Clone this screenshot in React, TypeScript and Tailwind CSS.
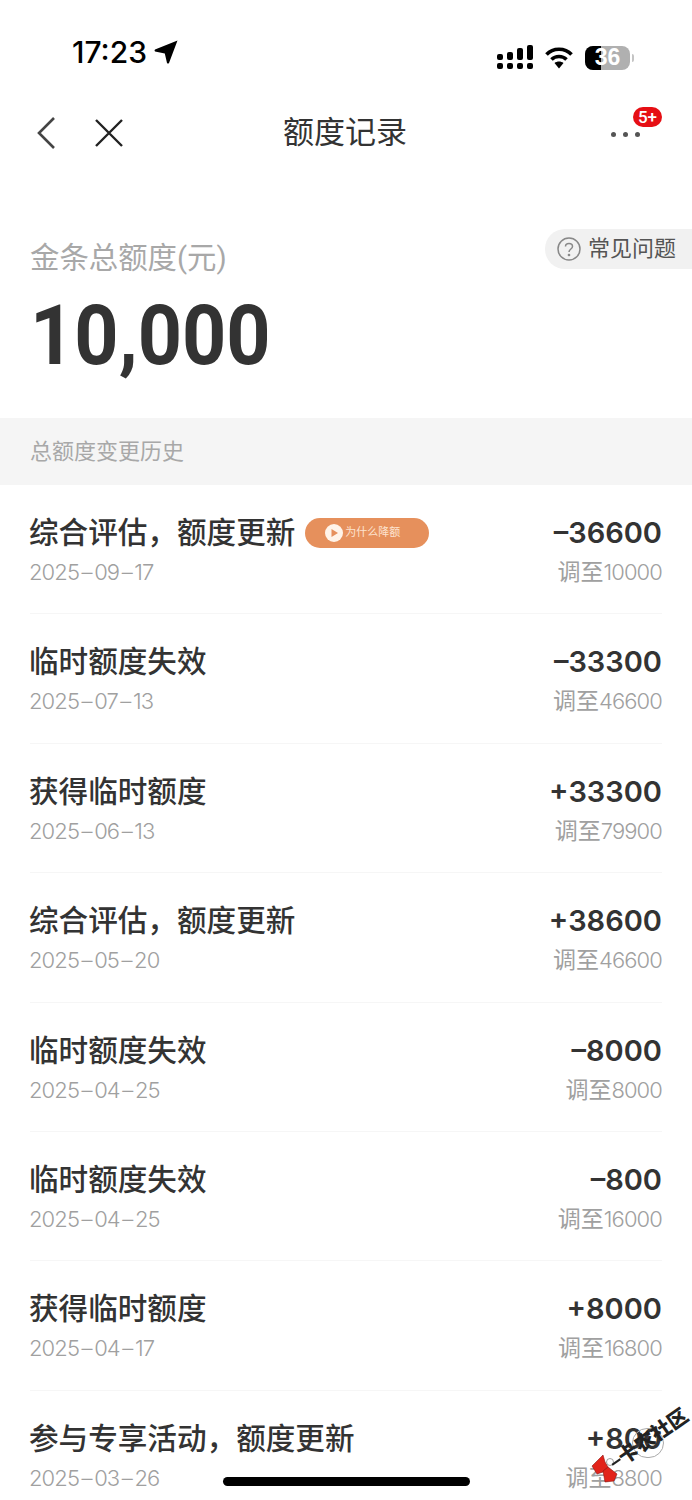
const CJK = `"Roboto","Noto Sans CJK SC",sans-serif`;
const NUM = `"Inter","Noto Sans CJK SC",sans-serif`;

const rows = [
  { title: "综合评估，额度更新", date: ["2025", "09", "17"], amount: "–36600", sub: "10000", badge: true },
  { title: "临时额度失效", date: ["2025", "07", "13"], amount: "–33300", sub: "46600" },
  { title: "获得临时额度", date: ["2025", "06", "13"], amount: "+33300", sub: "79900" },
  { title: "综合评估，额度更新", date: ["2025", "05", "20"], amount: "+38600", sub: "46600" },
  { title: "临时额度失效", date: ["2025", "04", "25"], amount: "–8000", sub: "8000" },
  { title: "临时额度失效", date: ["2025", "04", "25"], amount: "–800", sub: "16000" },
  { title: "获得临时额度", date: ["2025", "04", "17"], amount: "+8000", sub: "16800" },
  { title: "参与专享活动，额度更新", date: ["2025", "03", "26"], amount: "+800", sub: "8800" },
];

function StatusIcons() {
  return (
    <div className="flex items-center gap-[12px]">
      <svg width="36" height="25" viewBox="0 0 36 25" fill="#000">
        <rect x="0" y="9" width="6" height="6" rx="2" />
        <rect x="0" y="18" width="6" height="6" rx="2" />
        <rect x="10" y="7" width="6" height="8" rx="2" />
        <rect x="10" y="18" width="6" height="6" rx="2" />
        <rect x="20" y="3" width="6" height="12" rx="2" />
        <rect x="20" y="18" width="6" height="6" rx="2" />
        <rect x="30" y="0" width="6" height="15" rx="2" />
        <rect x="30" y="18" width="6" height="6" rx="2" />
      </svg>
      <svg width="28" height="23" viewBox="0 0 28 23" fill="none" stroke="#000" strokeWidth="3.6">
        <path d="M1.5 8.5 C8 1.5 20 1.5 26.5 8.5" />
        <path d="M6.5 13.5 C10.5 9.5 17.5 9.5 21.5 13.5" />
        <path d="M9.5 17 L14 22.5 L18.5 17 C16 15 12 15 9.5 17 Z" fill="#000" stroke="none" />
      </svg>
      <div className="flex items-center gap-[2px]">
        <div
          className="relative flex h-[24px] w-[45px] items-center justify-center overflow-hidden rounded-[8px] bg-[#b0b0b0] text-[23px] font-semibold leading-none text-white"
          style={{ fontFamily: '"Liberation Sans",sans-serif' }}
        >
          <div className="absolute inset-y-0 left-0 w-[16px] bg-black" />
          <span className="relative">36</span>
        </div>
        <div className="h-[8px] w-[2px] rounded-r bg-[#c4c4c4]" />
      </div>
    </div>
  );
}

function Row({ r, last }: { r: (typeof rows)[number]; last: boolean }) {
  return (
    <div className="mx-[30px] flex h-[129.4px] shrink-0 items-start justify-between border-b border-[#f6f6f6] pt-[27px]" style={last ? { borderBottom: 0 } : undefined}>
      <div className="flex flex-col">
        <div className="flex h-[41px] items-center">
          <span className="-ml-[1px] pt-[2px] text-[29.6px] font-medium leading-[41px] text-[#333333]">{r.title}</span>
          {r.badge && (
            <span className="ml-[10px] flex h-[30px] w-[124px] items-center rounded-full bg-[#e6905c] pl-[20px]">
              <svg width="18" height="18" viewBox="0 0 18 18">
                <circle cx="9" cy="9" r="9" fill="#fff3e8" />
                <path d="M6.5 5 L13 9 L6.5 13 Z" fill="#e6905c" />
              </svg>
              <span className="ml-[2px] text-[11px] leading-none text-[#fde3d0]">为什么降额</span>
            </span>
          )}
        </div>
        <span className="mt-[2px] -ml-[1px] text-[22px] font-light leading-[34px] tracking-[-0.9px] text-[#a0a0a0]" style={{ fontFamily: NUM }}>
          {r.date[0]}
          <span className="mx-[2.5px]">–</span>
          {r.date[1]}
          <span className="mx-[2.5px]">–</span>
          {r.date[2]}
        </span>
      </div>
      <div className="flex flex-col items-end">
        <span className="h-[41px] text-[29px] font-semibold leading-[41px] text-[#333333]" style={{ fontFamily: NUM }}>
          {r.amount}
        </span>
        <span className="mt-[2px] flex items-baseline leading-[34px] text-[#a0a0a0]">
          <span className="text-[23px]">调至</span>
          <span className="text-[22px] font-light tracking-[-0.9px]" style={{ fontFamily: NUM }}>{r.sub}</span>
        </span>
      </div>
    </div>
  );
}

export default function App() {
  return (
    <div className="relative flex h-[1500px] w-[692px] flex-col overflow-hidden bg-white" style={{ fontFamily: CJK }}>
      <div className="flex h-[101px] shrink-0 items-end justify-between pb-[31px] pl-[72px] pr-[58px]">
        <div className="flex items-center gap-[7px]">
          <span className="text-[30px] font-medium leading-[36px] text-black" style={{ fontFamily: '"Inter",sans-serif' }}>17:23</span>
          <svg width="24" height="24" viewBox="0 0 24 24" fill="#000">
            <path d="M23.5 0.5 L15 23 Q14 24 13 23 L10.8 13.5 L1 11.5 Q0 10.5 1 9.5 Z" />
          </svg>
        </div>
        <StatusIcons />
      </div>

      <div className="relative flex h-[64px] shrink-0 items-center justify-between pl-[36px] pr-[30px]">
        <div className="flex items-center gap-[38px]">
          <svg width="20" height="34" viewBox="0 0 20 34" fill="none" stroke="#444" strokeWidth="2.6">
            <path d="M18 2 L3 17 L18 32" />
          </svg>
          <svg width="30" height="28" viewBox="0 0 30 28" fill="none" stroke="#222" strokeWidth="2.4">
            <path d="M2 1 L28 27 M28 1 L2 27" />
          </svg>
        </div>
        <span className="absolute left-0 right-[2px] text-center text-[31px] leading-[40px] text-[#333333]">额度记录</span>
        <div className="relative mb-[28px] mr-[22px] flex h-[6px] w-[29px] items-center justify-between self-end">
          <i className="h-[5px] w-[5px] rounded-full bg-[#555]" />
          <i className="h-[5px] w-[5px] rounded-full bg-[#555]" />
          <i className="h-[5px] w-[5px] rounded-full bg-[#555]" />
          <span className="absolute left-[22px] top-[-24px] flex h-[20px] w-[29px] items-center justify-center rounded-full bg-[#e60f14] text-[17px] font-medium leading-none text-white">5+</span>
        </div>
      </div>

      <div className="relative h-[253px] shrink-0 pl-[30px]">
        <div className="absolute right-0 top-[64px] flex h-[40px] w-[147px] items-center rounded-l-[20px] bg-[#f1f1f1] pl-[12px]">
          <svg width="24" height="24" viewBox="0 0 24 24" fill="none" stroke="#888" strokeWidth="1.5">
            <circle cx="12" cy="12" r="11" />
            <path d="M8.5 9.5 C8.5 5.5 15.5 5.5 15.5 9.5 C15.5 12 12 12 12 15" />
            <circle cx="12" cy="18" r="0.6" />
          </svg>
          <span className="ml-[7px] text-[22px] leading-none text-[#555]">常见问题</span>
        </div>
        <div className="pt-[73px] text-[29.4px] leading-[40px] text-[#a8a8a8]">金条总额度(元)</div>
        <div className="mt-[12px] origin-left scale-x-[0.92] text-[84px] font-bold leading-[92px] text-[#333333]" style={{ fontFamily: '"Roboto",sans-serif' }}>10,000</div>
      </div>

      <div className="flex h-[67px] shrink-0 items-center bg-[#f5f5f5] pl-[30px] text-[22px] text-[#a8a8a8]">总额度变更历史</div>

      <div className="flex flex-col">
        {rows.map((r, i) => (
          <Row key={i} r={r} last={i === rows.length - 1} />
        ))}
      </div>

      <div className="absolute left-[223px] top-[1477px] h-[9px] w-[247px] rounded-full bg-black" />

      <div className="absolute left-[632px] top-[1428px] h-[30px] w-[32px] rounded-full border border-[#aaa]" />
      <svg className="absolute left-[590px] top-[1454px]" width="30" height="30" viewBox="0 0 30 30">
        <path d="M2 12 L13 1 L15 8 L18 13 L13 18 L7 20 Z" fill="#e2231a" stroke="#8c1512" strokeWidth="0.6" />
        <path d="M13 17 L18 13 L27 20 L24 27 L15 28 Z" fill="#e2231a" stroke="#8c1512" strokeWidth="0.6" />
        <circle cx="20" cy="8" r="3.5" fill="#fff" stroke="#777" strokeWidth="0.7" />
      </svg>
      <div className="absolute left-[604px] top-[1429px] flex h-[20px] w-[90px] rotate-[-35deg] items-center whitespace-nowrap">
        <span className="h-[2px] w-[10px] shrink-0 bg-[#222]" />
        <span className="text-[20px] font-black leading-none text-[#222]">卡农社区</span>
      </div>
    </div>
  );
}
